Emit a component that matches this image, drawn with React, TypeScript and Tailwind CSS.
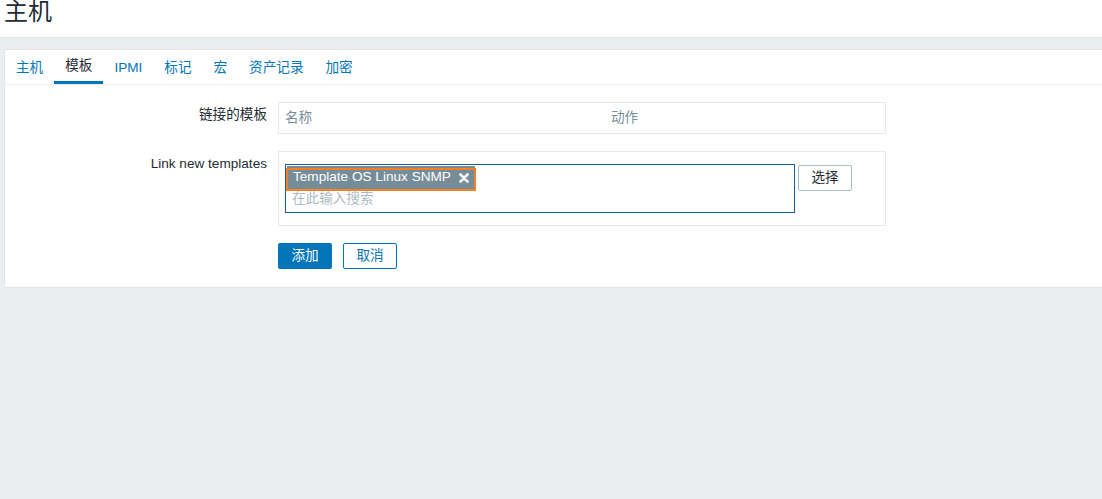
import React from 'react';

const tabs = ['主机', '模板', 'IPMI', '标记', '宏', '资产记录', '加密'];

export default function App() {
  return (
    <div className="min-h-[499px] bg-[#ebeef0] text-[13.6px] text-[#1f2c33] font-['Liberation_Sans','Noto_Sans_CJK_SC',sans-serif]">
      {/* 页头 */}
      <header className="h-[38px] bg-white border-b border-[#dfe4e7] pl-[4px]">
        <h1 className="text-[24px] leading-[24px] font-normal">主机</h1>
      </header>

      <div className="pt-[11px] pl-[4px]">
        <div className="bg-white border border-r-0 border-[#dfe4e7]">
          {/* 标签页 */}
          <ul className="flex h-[35px] border-b border-[#ebeef0]">
            {tabs.map((t) => (
              <li
                key={t}
                className={
                  t === '模板'
                    ? 'h-[34px] flex items-center px-[11px] border-b-[3px] border-[#0275b8] pt-[2px] text-[#1f2c33]'
                    : 'h-[34px] flex items-center px-[11px] pt-[2px] text-[#0275b8]'
                }
              >
                {t}
              </li>
            ))}
          </ul>

          <div className="pt-[17px] pb-[18px]">
            {/* 链接的模板 */}
            <div className="flex">
              <div className="w-[262px] text-right pt-[5px] leading-[16px]">链接的模板</div>
              <div className="ml-[11px] w-[608px] h-[32px] border border-[#e6eaec] flex items-center px-[6px] text-[#768d99]">
                <span className="w-[326px]">名称</span>
                <span>动作</span>
              </div>
            </div>

            {/* Link new templates */}
            <div className="flex mt-[17px]">
              <div className="w-[262px] text-right pt-[5px] leading-[16px]">Link new templates</div>
              <div className="ml-[11px] w-[608px] border border-[#e6eaec] pl-[6px] pt-[12px] pb-[12px] flex items-start">
                <div className="w-[510px] h-[49px] border border-[#1a5d8f]">
                  <div className="mt-[3px] inline-flex items-center w-[190px] h-[23px] border-2 border-[#f47f24] bg-[#768d99] shadow-[0_-3px_0_-1px_#768d99] text-white pl-[5px] pr-[5px] leading-[16px]">
                    <span className="flex-1 -mt-[5px]">Template OS Linux SNMP</span>
                    <svg width="10" height="10" viewBox="0 0 10 10" className="-mt-[3px]">
                      <path d="M1.5 1.5 L8.5 8.5 M8.5 1.5 L1.5 8.5" stroke="white" strokeWidth="2.6" strokeLinecap="round" />
                    </svg>
                  </div>
                  <div className="pl-[6px] leading-[16px] text-[#acbbc2]">在此输入搜索</div>
                </div>
                <button className="ml-[3px] mt-[1px] w-[54px] h-[26px] border border-[#acbbc2] rounded-[2px] bg-white text-[#1f2c33]">
                  选择
                </button>
              </div>
            </div>

            {/* 按钮 */}
            <div className="flex mt-[17px] ml-[273px] gap-[11px]">
              <button className="w-[54px] h-[26px] rounded-[2px] bg-[#0275b8] text-white">添加</button>
              <button className="w-[54px] h-[26px] rounded-[2px] border border-[#0275b8] bg-white text-[#0275b8]">取消</button>
            </div>
          </div>
        </div>
      </div>
    </div>
  );
}
